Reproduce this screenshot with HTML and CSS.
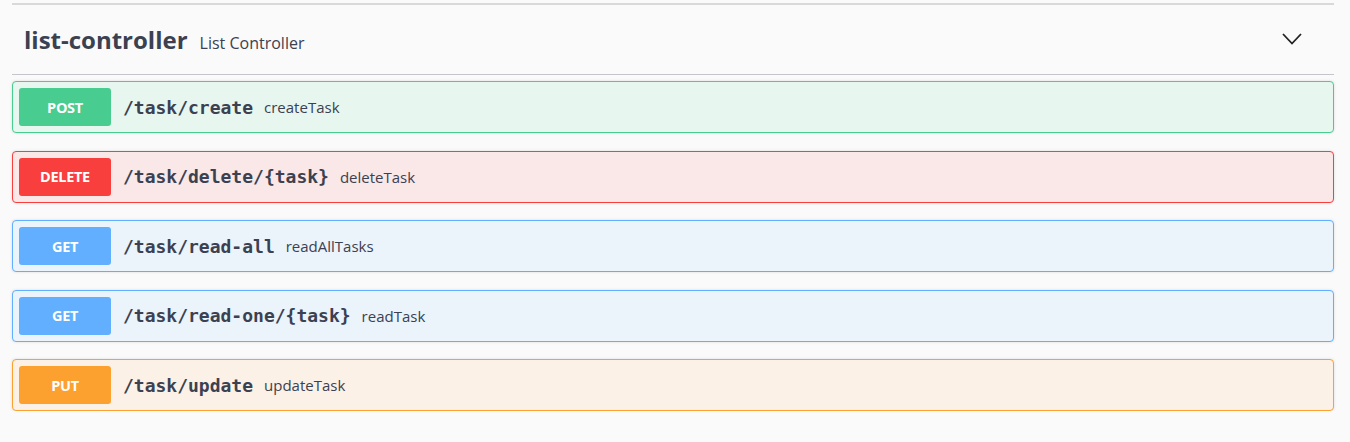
FILE: index.html
```html
<!DOCTYPE html>
<html>
<head>
<meta charset="utf-8">
<link rel="stylesheet" href="styles.css">
</head>
<body>
<div class="wrap">
  <div class="tag">
    <h3 class="tag-title"><span class="tag-name">list-controller</span><small class="tag-desc">List Controller</small></h3>
    <svg class="chev" width="20" height="12" viewBox="0 0 20 12"><polyline points="1,1 10,10.5 19,1" fill="none" stroke="#222" stroke-width="1.8"/></svg>
  </div>
  <div class="ops">
    <div class="op post"><span class="method">POST</span><span class="path">/task/create</span><span class="desc">createTask</span></div>
    <div class="op delete"><span class="method">DELETE</span><span class="path">/task/delete/{task}</span><span class="desc">deleteTask</span></div>
    <div class="op get"><span class="method">GET</span><span class="path">/task/read-all</span><span class="desc">readAllTasks</span></div>
    <div class="op get"><span class="method">GET</span><span class="path">/task/read-one/{task}</span><span class="desc">readTask</span></div>
    <div class="op put"><span class="method">PUT</span><span class="path">/task/update</span><span class="desc">updateTask</span></div>
  </div>
</div>
</body>
</html>
```
FILE: styles.css
```css
html, body { margin: 0; padding: 0; background: #fafafa; }
body { font-family: "Open Sans", "Noto Sans", sans-serif; color: #3b4151; }
.wrap { width: 1322px; margin-left: 12px; padding-top: 3px; }
.tag {
  border-top: 2px solid #d9d9dc;
  border-bottom: 1px solid #c4c6cb;
  height: 69px;
  display: flex;
  align-items: center;
  justify-content: space-between;
  padding: 0 32px 0 12px;
}
.tag-title { margin: 0; display: flex; align-items: baseline; }
.tag-name { font-size: 24px; font-weight: 700; letter-spacing: 0; color: #3b4151; }
.tag-desc { font-size: 16px; font-weight: 400; margin-left: 12px; color: #3b4151; }
.chev { display: block; margin-top: -2px; }
.ops { margin-top: 6px; display: flex; flex-direction: column; gap: 17.5px; }
.op {
  display: flex;
  align-items: center;
  border: 1px solid;
  border-radius: 4px;
  padding: 6px;
  box-shadow: 0 0 3px rgba(0,0,0,.12);
}
.method {
  width: 92px;
  height: 38px;
  border-radius: 3px;
  display: flex;
  align-items: center;
  justify-content: center;
  color: #fff;
  font-weight: 700;
  font-size: 14.5px;
  letter-spacing: -0.3px;
}
.path {
  margin-left: 12px;
  font-family: "DejaVu Sans Mono", "Liberation Mono", monospace;
  font-weight: 700;
  font-size: 18px;
  color: #3b4151;
}
.desc { margin-left: 11px; font-size: 15px; color: #3b4151; }
.post { background: #e8f6f0; border-color: #49cc90; }
.post .method { background: #49cc90; }
.delete { background: #fae7e7; border-color: #f93e3e; }
.delete .method { background: #f93e3e; }
.get { background: #ebf3fb; border-color: #61affe; }
.get .method { background: #61affe; }
.put { background: #fbf1e6; border-color: #fca130; }
.put .method { background: #fca130; }
```
